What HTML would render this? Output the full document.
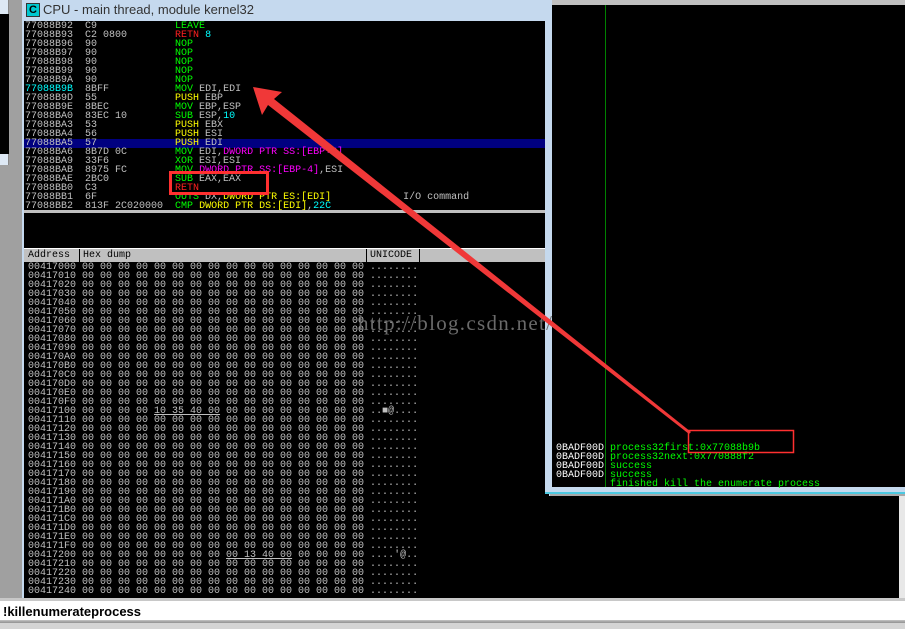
<!DOCTYPE html>
<html><head><meta charset="utf-8"><style>
*{margin:0;padding:0;box-sizing:border-box}
body{width:905px;height:629px;overflow:hidden;background:#a8a8a8;position:relative;font-family:"Liberation Mono",monospace}
.abs{position:absolute}
.m{font-family:"Liberation Mono",monospace;font-size:10px;line-height:9px;white-space:pre;color:#c0c0c0}
.g{color:#00ff00}.r{color:#ff2020}.y{color:#ffff00}.c{color:#00ffff}.p{color:#ff00ff}.w{color:#c0c0c0}
</style></head><body>
<!-- left strip -->
<div class="abs" style="left:0;top:0;width:22px;height:600px;background:#a0a0a0"></div>
<div class="abs" style="left:0;top:0;width:9px;height:165px;background:#dde8f4;border-right:1px solid #888"></div>
<div class="abs" style="left:0;top:14px;width:9px;height:140px;background:#000"></div>
<!-- CPU window -->
<div class="abs" style="left:22px;top:0;width:528px;height:600px;background:#c5d9ee"></div>
<div class="abs" style="left:26px;top:3px;width:14px;height:14px;background:#00c8d0;border:1px solid #333;font:bold 11px 'Liberation Sans',sans-serif;color:#000;text-align:center;line-height:12px">C</div>
<div class="abs" style="left:43px;top:2px;font:13px 'Liberation Sans',sans-serif;color:#333">CPU - main thread, module kernel32</div>
<div class="abs" style="left:24px;top:21px;width:525px;height:190px;background:#000"></div>
<div class="abs" style="left:24px;top:139px;width:525px;height:9px;background:#000080"></div>
<div class="abs" style="left:24px;top:210px;width:525px;height:3px;background:#c0c0c0"></div>
<div class="abs" style="left:24px;top:213px;width:525px;height:35px;background:#000"></div>
<div class="abs" style="left:24px;top:248px;width:525px;height:14px;background:#c0c0c0;border-top:1px solid #fff"></div>
<div class="abs m" style="left:28px;top:251px;color:#000">Address</div>
<div class="abs" style="left:79px;top:249px;width:1px;height:13px;background:#000"></div>
<div class="abs m" style="left:83px;top:251px;color:#000">Hex dump</div>
<div class="abs" style="left:366px;top:249px;width:1px;height:13px;background:#000"></div>
<div class="abs m" style="left:370px;top:251px;color:#000">UNICODE</div>
<div class="abs" style="left:419px;top:249px;width:1px;height:13px;background:#000"></div>
<div class="abs" style="left:24px;top:262px;width:525px;height:338px;background:#000"></div>

<div class="abs m" style="left:25px;top:22px">77088B92  C9             <span class="g">LEAVE</span>
77088B93  C2 0800        <span class="r">RETN</span> <span class="c">8</span>
77088B96  90             <span class="g">NOP</span>
77088B97  90             <span class="g">NOP</span>
77088B98  90             <span class="g">NOP</span>
77088B99  90             <span class="g">NOP</span>
77088B9A  90             <span class="g">NOP</span>
<span class="c">77088B9B</span>  8BFF           <span class="g">MOV</span> EDI,EDI
77088B9D  55             <span class="y">PUSH</span> EBP
77088B9E  8BEC           <span class="g">MOV</span> EBP,ESP
77088BA0  83EC 10        <span class="g">SUB</span> ESP,<span class="c">10</span>
77088BA3  53             <span class="y">PUSH</span> EBX
77088BA4  56             <span class="y">PUSH</span> ESI
77088BA5  57             <span class="y">PUSH</span> EDI
77088BA6  8B7D 0C        <span class="g">MOV</span> EDI,<span class="p">DWORD PTR SS:[EBP+C]</span>
77088BA9  33F6           <span class="g">XOR</span> ESI,ESI
77088BAB  8975 FC        <span class="g">MOV</span> <span class="p">DWORD PTR SS:[EBP-4]</span>,ESI
77088BAE  2BC0           <span class="g">SUB</span> EAX,EAX
77088BB0  C3             <span class="r">RETN</span>
77088BB1  6F             <span class="g">OUTS</span> DX,<span class="y">DWORD PTR ES:[EDI]</span>            I/O command
77088BB2  813F 2C020000  <span class="g">CMP</span> <span class="y">DWORD PTR DS:[EDI]</span>,<span class="c">22C</span></div>

<div class="abs m" style="left:28px;top:263px">00417000 00 00 00 00 00 00 00 00 00 00 00 00 00 00 00 00 ........
00417010 00 00 00 00 00 00 00 00 00 00 00 00 00 00 00 00 ........
00417020 00 00 00 00 00 00 00 00 00 00 00 00 00 00 00 00 ........
00417030 00 00 00 00 00 00 00 00 00 00 00 00 00 00 00 00 ........
00417040 00 00 00 00 00 00 00 00 00 00 00 00 00 00 00 00 ........
00417050 00 00 00 00 00 00 00 00 00 00 00 00 00 00 00 00 ........
00417060 00 00 00 00 00 00 00 00 00 00 00 00 00 00 00 00 ........
00417070 00 00 00 00 00 00 00 00 00 00 00 00 00 00 00 00 ........
00417080 00 00 00 00 00 00 00 00 00 00 00 00 00 00 00 00 ........
00417090 00 00 00 00 00 00 00 00 00 00 00 00 00 00 00 00 ........
004170A0 00 00 00 00 00 00 00 00 00 00 00 00 00 00 00 00 ........
004170B0 00 00 00 00 00 00 00 00 00 00 00 00 00 00 00 00 ........
004170C0 00 00 00 00 00 00 00 00 00 00 00 00 00 00 00 00 ........
004170D0 00 00 00 00 00 00 00 00 00 00 00 00 00 00 00 00 ........
004170E0 00 00 00 00 00 00 00 00 00 00 00 00 00 00 00 00 ........
004170F0 00 00 00 00 00 00 00 00 00 00 00 00 00 00 00 00 ........
00417100 00 00 00 00 <u>10 35 40 00</u> 00 00 00 00 00 00 00 00 ..&#9632;@....
00417110 00 00 00 00 00 00 00 00 00 00 00 00 00 00 00 00 ........
00417120 00 00 00 00 00 00 00 00 00 00 00 00 00 00 00 00 ........
00417130 00 00 00 00 00 00 00 00 00 00 00 00 00 00 00 00 ........
00417140 00 00 00 00 00 00 00 00 00 00 00 00 00 00 00 00 ........
00417150 00 00 00 00 00 00 00 00 00 00 00 00 00 00 00 00 ........
00417160 00 00 00 00 00 00 00 00 00 00 00 00 00 00 00 00 ........
00417170 00 00 00 00 00 00 00 00 00 00 00 00 00 00 00 00 ........
00417180 00 00 00 00 00 00 00 00 00 00 00 00 00 00 00 00 ........
00417190 00 00 00 00 00 00 00 00 00 00 00 00 00 00 00 00 ........
004171A0 00 00 00 00 00 00 00 00 00 00 00 00 00 00 00 00 ........
004171B0 00 00 00 00 00 00 00 00 00 00 00 00 00 00 00 00 ........
004171C0 00 00 00 00 00 00 00 00 00 00 00 00 00 00 00 00 ........
004171D0 00 00 00 00 00 00 00 00 00 00 00 00 00 00 00 00 ........
004171E0 00 00 00 00 00 00 00 00 00 00 00 00 00 00 00 00 ........
004171F0 00 00 00 00 00 00 00 00 00 00 00 00 00 00 00 00 ........
00417200 00 00 00 00 00 00 00 00 <u>00 13 40 00</u> 00 00 00 00 ....'@..
00417210 00 00 00 00 00 00 00 00 00 00 00 00 00 00 00 00 ........
00417220 00 00 00 00 00 00 00 00 00 00 00 00 00 00 00 00 ........
00417230 00 00 00 00 00 00 00 00 00 00 00 00 00 00 00 00 ........
00417240 00 00 00 00 00 00 00 00 00 00 00 00 00 00 00 00 ........</div>

<!-- right log window -->
<div class="abs" style="left:545px;top:0;width:360px;height:494px;background:#c5d9ee;border-bottom:2px solid #4cc8e0"></div>
<div class="abs" style="left:552px;top:0;width:353px;height:5px;background:#c0c0c0"></div>
<div class="abs" style="left:552px;top:5px;width:353px;height:482px;background:#000"></div>
<div class="abs" style="left:605px;top:5px;width:1px;height:482px;background:#008000"></div>
<div class="abs m" style="left:556px;top:444px;color:#fff">0BADF00D
0BADF00D
0BADF00D
0BADF00D</div>
<div class="abs m g" style="left:610px;top:444px">process32first:0x77088b9b
process32next:0x770888f2
success
success
finished kill the enumerate process</div>
<div class="abs" style="left:545px;top:496px;width:354px;height:102px;background:#000"></div>
<div class="abs" style="left:899px;top:496px;width:6px;height:102px;background:#e8e8e8"></div>

<!-- watermark -->
<div class="abs" style="left:358px;top:311px;font:21px 'Liberation Serif',serif;letter-spacing:1.3px;color:#6a6a6a">http://blog.csdn.net/</div>

<!-- command bar -->
<div class="abs" style="left:0;top:598px;width:905px;height:3px;background:#c8c8c8"></div>
<div class="abs" style="left:0;top:601px;width:905px;height:20px;background:#fff;border-bottom:1px solid #bbb"></div>
<div class="abs" style="left:3px;top:604px;font:bold 13px 'Liberation Sans',sans-serif;color:#000">!killenumerateprocess</div>
<div class="abs" style="left:0;top:622px;width:905px;height:7px;background:#d4d4d4;border-top:1px solid #999"></div>

<!-- annotations -->
<svg class="abs" style="left:0;top:0" width="905" height="629">
<rect x="170.5" y="172.5" width="97" height="21" fill="none" stroke="#ff3030" stroke-width="3"/>
<rect x="688.5" y="430.5" width="105" height="22" fill="none" stroke="#ff3030" stroke-width="1.5"/>
<polygon points="253,87 282,92 274,99 691,432 689,434 268,105 262,115" fill="#f03838"/>
</svg>
</body></html>
